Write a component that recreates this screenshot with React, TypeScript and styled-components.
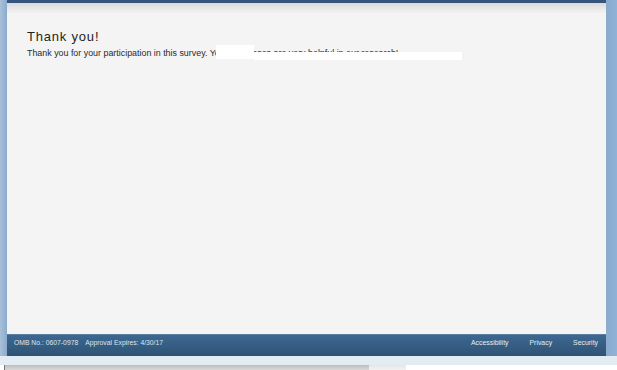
import React from "react";
import styled, { createGlobalStyle } from "styled-components";

const GlobalStyle = createGlobalStyle`
  html, body {
    margin: 0;
    padding: 0;
    width: 617px;
    height: 370px;
    overflow: hidden;
    background: #e3ebf3;
    font-family: "Liberation Sans", Arial, sans-serif;
  }
`;

export default function App() {
  return (
    <>
      <GlobalStyle />
      <Page>
        <Frame>
          <Panel>
            <TopBar />
            <HeaderBand />
            <Content>
              <Title>Thank you!</Title>
              <Message>
                Thank you for your participation in this survey. Y
                <Hidden>
                  our responses are very helpful in our research!
                  <Redact $left={1} $top={-3} $width={38} $height={14} />
                  <Redact $left={39} $top={4} $width={208} $height={8} />
                </Hidden>
              </Message>
            </Content>
            <Footer>
              <FooterGroup>
                <FooterText>OMB No.: 0607-0978</FooterText>
                <FooterText>Approval Expires: 4/30/17</FooterText>
              </FooterGroup>
              <FooterLinks>
                <FooterLink>Accessibility</FooterLink>
                <FooterLink>Privacy</FooterLink>
                <FooterLink>Security</FooterLink>
              </FooterLinks>
            </Footer>
          </Panel>
        </Frame>
        <BottomStrip>
          <Taskbar>
            <TaskItem $w={364} $dark />
            <TaskItem $w={37} />
          </Taskbar>
        </BottomStrip>
      </Page>
    </>
  );
}

const Page = styled.div`
  width: 617px;
  height: 370px;
  display: flex;
  flex-direction: column;
`;

const Frame = styled.div`
  height: 356px;
  display: flex;
  padding: 0 11px 0 7px;
  background: linear-gradient(to right, #a9c0d9 0px, #8babcd 7px, #8babcd 606px, #8fb2d6 617px);
  box-sizing: border-box;
`;

const Panel = styled.div`
  flex: 1;
  display: flex;
  flex-direction: column;
  background: #f4f4f4;
`;

const TopBar = styled.div`
  height: 3px;
  background: #36547c;
`;

const HeaderBand = styled.div`
  height: 10px;
  background: linear-gradient(to bottom, #d9d9d9, #ececec 70%, #f1f1f1);
`;

const Content = styled.div`
  flex: 1;
  padding: 16px 20px 0 20px;
`;

const Title = styled.h1`
  margin: 0;
  font-size: 13px;
  font-weight: normal;
  letter-spacing: 0.8px;
  color: #1e1e1e;
  line-height: 16px;
`;

const Message = styled.p`
  margin: 3px 0 0 0;
  font-size: 8.9px;
  line-height: 11px;
  color: #2a2a2a;
  white-space: nowrap;
`;

const Hidden = styled.span`
  position: relative;
`;

const Redact = styled.span<{ $left: number; $top: number; $width: number; $height: number }>`
  position: absolute;
  left: ${(p) => p.$left}px;
  top: ${(p) => p.$top}px;
  width: ${(p) => p.$width}px;
  height: ${(p) => p.$height}px;
  background: #ffffff;
`;

const Footer = styled.div`
  height: 22px;
  display: flex;
  align-items: flex-start;
  justify-content: space-between;
  padding: 4px 8px 0 7px;
  background: linear-gradient(to bottom, #3d6891, #2f5375);
  border-top: 1px solid #5a7fa3;
  box-sizing: border-box;
`;

const FooterGroup = styled.div`
  display: flex;
  gap: 7px;
`;

const FooterLinks = styled.div`
  display: flex;
  gap: 21px;
`;

const FooterText = styled.span`
  font-size: 6.8px;
  color: #dce5ee;
`;

const FooterLink = styled.span`
  font-size: 6.9px;
  color: #e6edf4;
`;

const BottomStrip = styled.div`
  flex: 1;
  display: flex;
  flex-direction: column;
  justify-content: flex-end;
  background: #e3ebf3;
`;

const Taskbar = styled.div`
  height: 5px;
  display: flex;
  padding-left: 4px;
  background: #ffffff;
`;

const TaskItem = styled.div<{ $w: number; $dark?: boolean }>`
  width: ${(p) => p.$w}px;
  background: ${(p) =>
    p.$dark
      ? "linear-gradient(to bottom, #bdbdbd, #d8d8d8)"
      : "linear-gradient(to bottom, #e6e6e6, #f2f2f2)"};
  border-left: ${(p) => (p.$dark ? "1px solid #777" : "none")};
`;
